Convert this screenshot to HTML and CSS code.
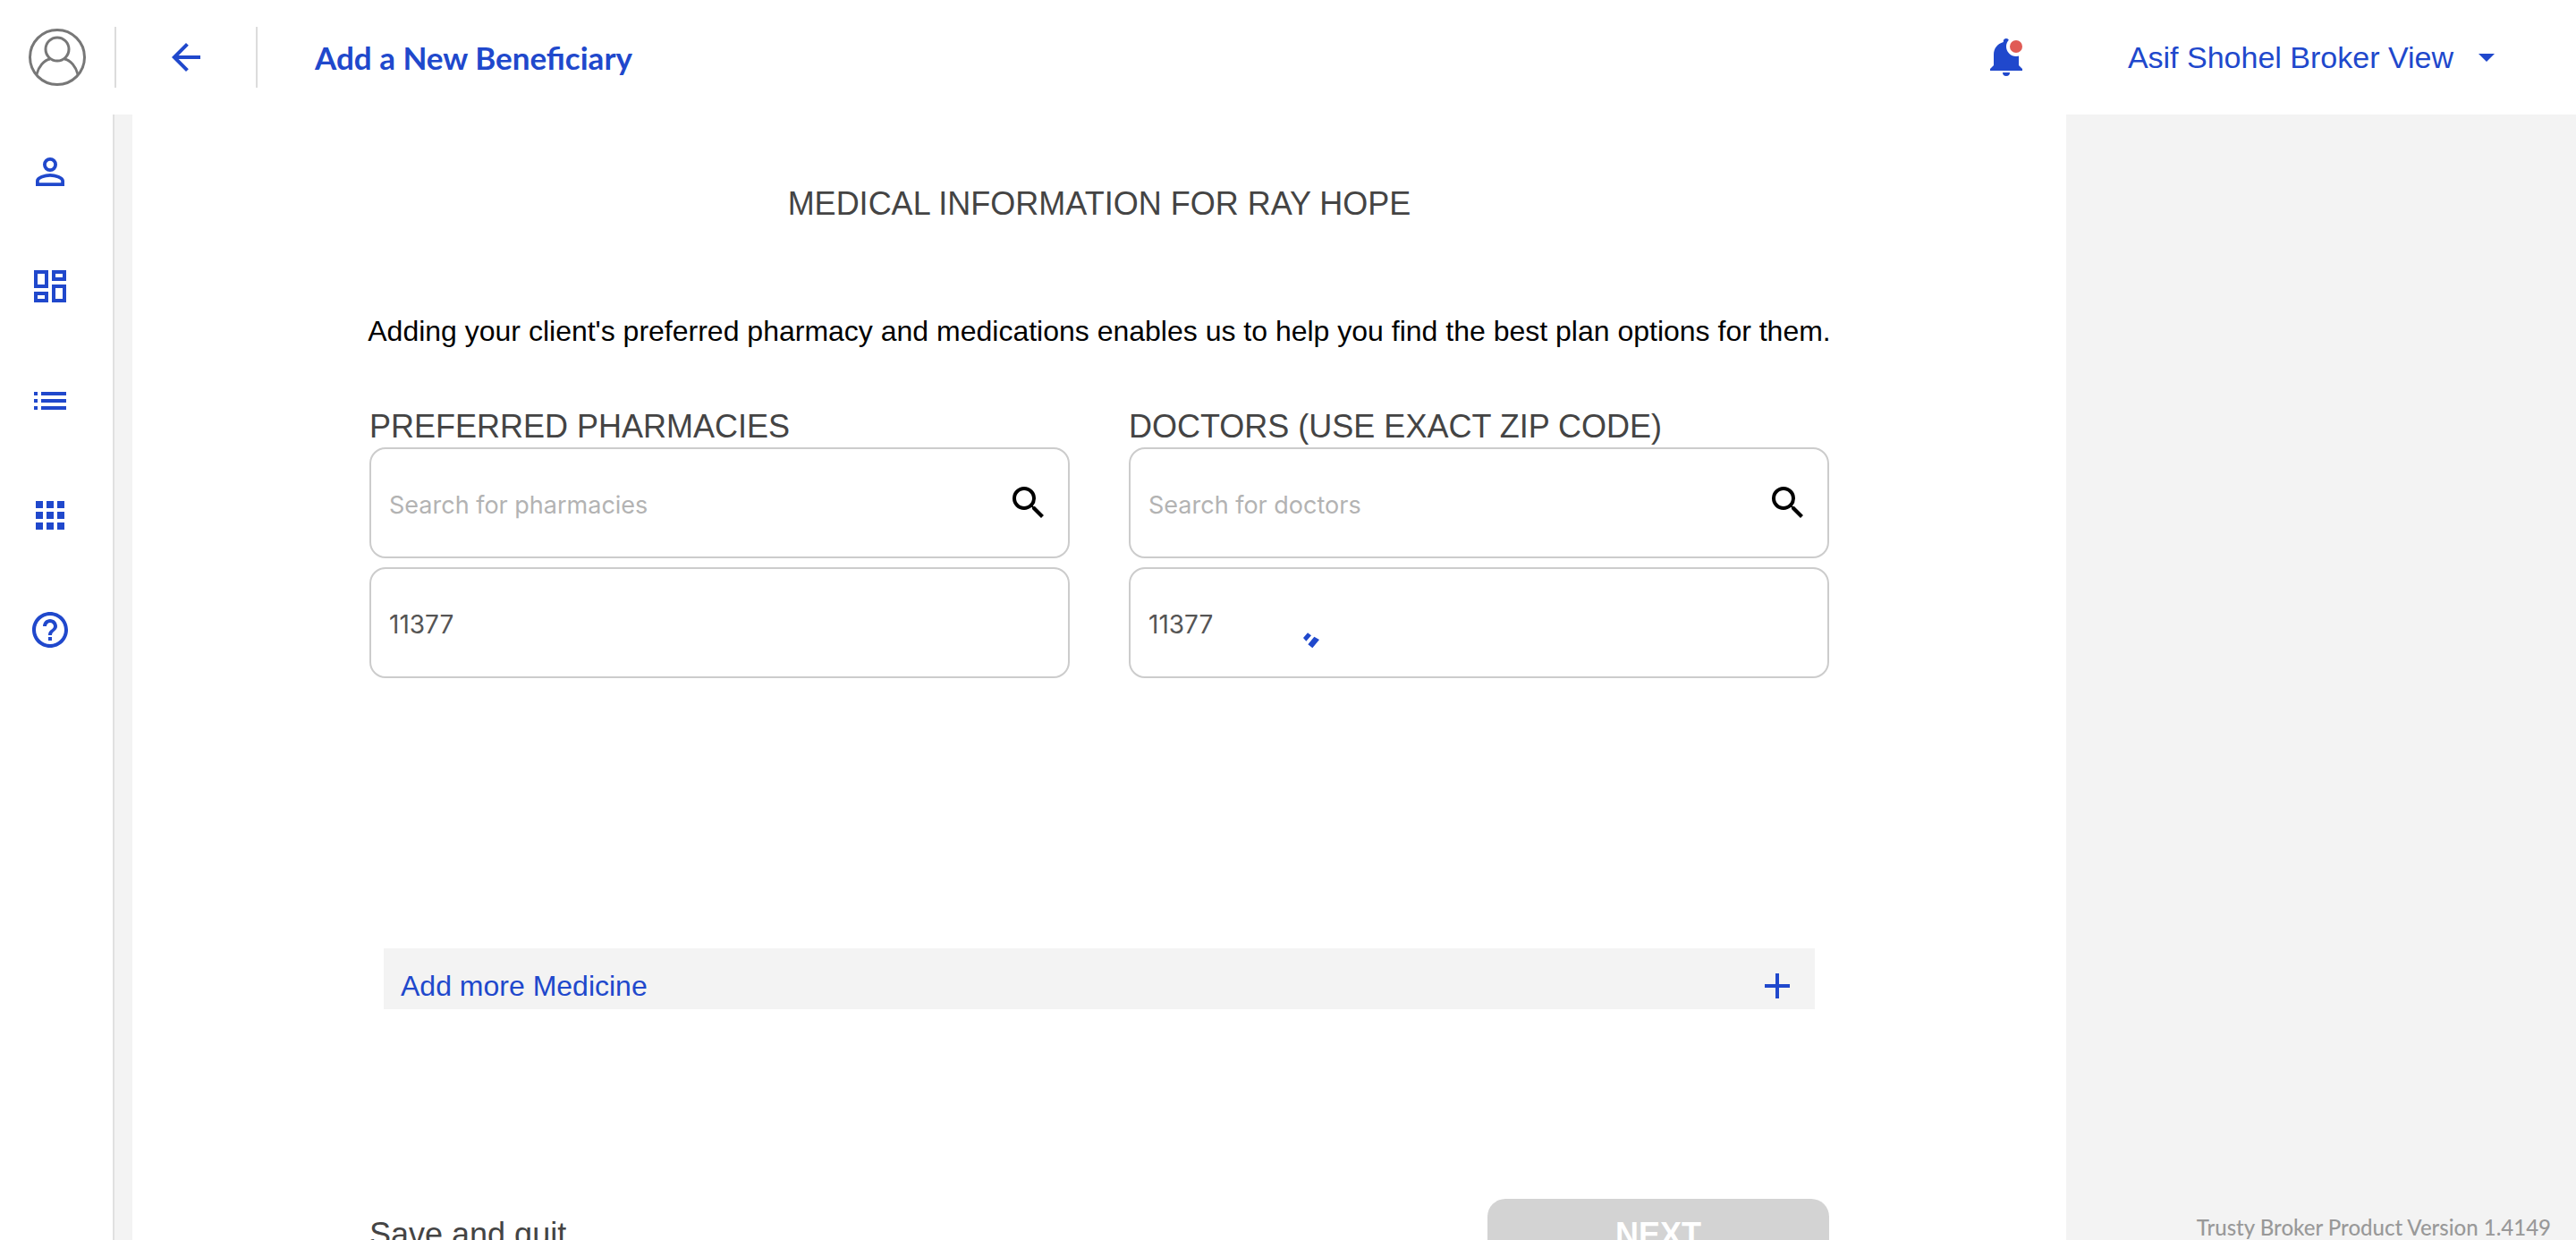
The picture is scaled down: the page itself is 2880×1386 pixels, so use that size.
FILE: index.html
```html
<!DOCTYPE html>
<html lang="en">
<head>
<meta charset="utf-8">
<meta name="viewport" content="width=device-width, initial-scale=1">
<title>Add a New Beneficiary</title>
<link rel="stylesheet" href="styles.css">
</head>
<body>
<div class="app">
  <header class="topbar">
    <a class="avatar" href="#profile" aria-label="Profile">
      <svg viewBox="0 0 64 64" width="64" height="64" fill="none" stroke="#777" stroke-width="3"><circle cx="32" cy="32" r="30.5"/><circle cx="32" cy="23" r="13"/><path d="M9 51C11 43 17 35 24 34M40 34C47 35 53 43 55 51"/></svg>
    </a>
    <button class="back" type="button" aria-label="Back">
      <svg class="icon" viewBox="0 0 24 24"><path d="M20 11H7.830l5.590-5.590L12 4l-8 8 8 8 1.410-1.410L7.830 13H20v-2z"/></svg>
    </button>
    <h1 class="page-title">Add a New Beneficiary</h1>
    <button class="bell" type="button" aria-label="Notifications">
      <svg viewBox="0 0 40 44" width="40" height="44"><path fill="#2048cc" d="M18 1c2 0 3.200 1.400 3.200 3v1C28 7 32 13 32 20v11l4 4v2H0v-2l4-4V19C4 12 8 7 14.800 5V4C14.800 2.400 16 1 18 1zM14 39h8a4 4 0 0 1-8 0z"/><circle cx="29" cy="10" r="11" fill="#fff"/><circle cx="29" cy="10" r="7" fill="#e05b55"/></svg>
    </button>
    <button class="account" type="button">Asif Shohel Broker View
      <svg viewBox="0 0 18 9" width="18" height="9"><path d="M0 0h18l-9 9z"/></svg>
    </button>
  </header>
  <div class="body">
    <nav class="sidebar" aria-label="Main">
      <a href="#clients" aria-label="Clients"><svg class="icon" viewBox="0 0 24 24"><path d="M12 5.900a2.100 2.100 0 1 1 0 4.200 2.100 2.100 0 0 1 0-4.200m0 9c2.970 0 6.100 1.460 6.100 2.100v1.100H5.900V17c0-.640 3.130-2.100 6.100-2.100M12 4a4 4 0 1 0 0 8 4 4 0 0 0 0-8zm0 9c-2.670 0-8 1.340-8 4v3h16v-3c0-2.660-5.330-4-8-4z"/></svg></a>
      <a href="#dashboard" aria-label="Dashboard"><svg class="icon" viewBox="0 0 24 24"><path d="M19 5v2h-4V5h4M9 5v6H5V5h4m10 8v6h-4v-6h4M9 17v2H5v-2h4M21 3h-8v6h8V3zM11 3H3v10h8V3zm10 8h-8v10h8V11zm-10 4H3v6h8v-6z"/></svg></a>
      <a href="#list" aria-label="List"><svg class="icon" viewBox="0 0 24 24"><path d="M3 13h2v-2H3v2zm0 4h2v-2H3v2zm0-8h2V7H3v2zm4 4h14v-2H7v2zm0 4h14v-2H7v2zM7 7v2h14V7H7z"/></svg></a>
      <a href="#apps" aria-label="Apps"><svg class="icon" viewBox="0 0 24 24"><path d="M4 8h4V4H4v4zm6 12h4v-4h-4v4zm-6 0h4v-4H4v4zm0-6h4v-4H4v4zm6 0h4v-4h-4v4zm6-10v4h4V4h-4zm-6 4h4V4h-4v4zm6 6h4v-4h-4v4zm0 6h4v-4h-4v4z"/></svg></a>
      <a href="#help" aria-label="Help"><svg class="icon" viewBox="0 0 24 24"><path d="M11 18h2v-2h-2v2zm1-16C6.480 2 2 6.480 2 12s4.480 10 10 10 10-4.480 10-10S17.520 2 12 2zm0 18c-4.410 0-8-3.590-8-8s3.590-8 8-8 8 3.590 8 8-3.590 8-8 8zm0-14c-2.210 0-4 1.790-4 4h2c0-1.100.9-2 2-2s2 .9 2 2c0 2-3 1.750-3 5h2c0-2.250 3-2.500 3-5 0-2.210-1.790-4-4-4z"/></svg></a>
    </nav>
    <main class="panel">
      <form class="form">
        <h2 class="heading form-title">MEDICAL INFORMATION FOR RAY HOPE</h2>
        <p class="intro">Adding your client's preferred pharmacy and medications enables us to help you find the best plan options for them.</p>
        <div class="columns">
          <section class="column">
            <h3 class="heading">PREFERRED PHARMACIES</h3>
            <div class="field">
              <input class="query" type="text" aria-label="Search for pharmacies" placeholder="Search for pharmacies">
              <button type="button" class="search" aria-label="Search"><svg class="icon" viewBox="0 0 24 24"><path d="M15.500 14h-.790l-.280-.270A6.471 6.471 0 0 0 16 9.500 6.500 6.500 0 1 0 9.500 16c1.610 0 3.090-.590 4.230-1.570l.270.280v.790l5 4.990L20.490 19l-4.990-5zm-6 0C7.010 14 5 11.990 5 9.500S7.010 5 9.500 5 14 7.010 14 9.500 11.990 14 9.500 14z"/></svg></button>
            </div>
            <div class="field"><input type="text" aria-label="Pharmacy zip code" value="11377"></div>
          </section>
          <section class="column">
            <h3 class="heading">DOCTORS (USE EXACT ZIP CODE)</h3>
            <div class="field">
              <input class="query" type="text" aria-label="Search for doctors" placeholder="Search for doctors">
              <button type="button" class="search" aria-label="Search"><svg class="icon" viewBox="0 0 24 24"><path d="M15.500 14h-.790l-.280-.270A6.471 6.471 0 0 0 16 9.500 6.500 6.500 0 1 0 9.500 16c1.610 0 3.090-.590 4.230-1.570l.270.280v.790l5 4.990L20.490 19l-4.990-5zm-6 0C7.010 14 5 11.990 5 9.500S7.010 5 9.500 5 14 7.010 14 9.500 11.990 14 9.500 14z"/></svg></button>
            </div>
            <div class="field">
              <input type="text" aria-label="Doctor zip code" value="11377">
              <svg class="loader" viewBox="0 0 54 54" width="18" height="18"><path d="M15 1l12 9-17 19L0 18zM37 14l17 10-23 28-15-12z"/></svg>
            </div>
          </section>
        </div>
        <button class="add" type="button">Add more Medicine
          <svg class="icon" viewBox="0 0 24 24"><path d="M19 13h-6v6h-2v-6H5v-2h6V5h2v6h6v2z"/></svg>
        </button>
        <div class="actions">
          <button class="quit" type="button">Save and quit</button>
          <button class="next" type="submit" disabled>NEXT</button>
        </div>
      </form>
    </main>
    <footer class="version">Trusty Broker Product Version 1.4149</footer>
  </div>
</div>
</body>
</html>
```
FILE: styles.css
```css
* { box-sizing: border-box; }

body {
  margin: 0;
  background: #f3f3f3;
  color: #444;
  font-family: "Liberation Sans", Arial, sans-serif;
}

h1, h2, h3, p { margin: 0; font-weight: 400; }

button {
  border: 0;
  padding: 0;
  background: none;
  color: inherit;
  font: inherit;
}

svg { display: block; flex: none; }

.icon { width: 48px; height: 48px; fill: currentColor; }

.app {
  display: flex;
  flex-direction: column;
  height: 100vh;
}

.topbar {
  display: flex;
  align-items: center;
  flex: none;
  height: 128px;
  padding: 0 91px 0 32px;
  background: #fff;
  color: #2048cc;
}

.back {
  display: flex;
  justify-content: center;
  align-items: center;
  width: 160px;
  height: 68px;
  margin: 0 64px 0 32px;
  border: solid #dcdcdc;
  border-width: 0 2px;
}

.page-title {
  flex: 1;
  font: 700 35px/48px Lato, sans-serif;
}

.bell { margin-right: 114px; }

.account {
  display: flex;
  align-items: center;
  gap: 28px;
  font-size: 34px;
  line-height: 48px;
}

.account svg { fill: currentColor; }

.body {
  display: flex;
  flex: 1;
  min-height: 0;
}

.sidebar {
  display: flex;
  flex-direction: column;
  gap: 80px;
  flex: none;
  width: 128px;
  padding: 40px 0 0 32px;
  border-right: 2px solid #e0e0e0;
  background: #fff;
}

.sidebar a { width: 48px; color: #2048cc; }

.panel {
  flex: 1;
  margin-left: 20px;
  padding: 76px 265px 48px;
  overflow: auto;
  scrollbar-width: none;
  background: #fff;
}

.form { display: flex; flex-direction: column; }

.heading { font-size: 36px; line-height: 48px; }

.form-title { text-align: center; }

.intro {
  margin: 94px -2px 0;
  color: #000;
  font-size: 32px;
  line-height: 48px;
  text-align: center;
  white-space: nowrap;
}

.columns {
  display: grid;
  grid-template-columns: 1fr 1fr;
  gap: 66px;
  margin-top: 60px;
}

.columns .heading { line-height: 46px; }

.field {
  display: flex;
  align-items: center;
  position: relative;
  height: 124px;
  padding: 0 20px;
  border: 2px solid #ccc;
  border-radius: 18px;
}

.field + .field { margin-top: 10px; }

.field input {
  flex: 1;
  min-width: 0;
  height: 100%;
  border: 0;
  padding: 4px 0 0;
  outline: 0;
  background: none;
  color: #555;
  font: 28px Inter, sans-serif;
}

.field .query { font-size: 27px; }

.field input::placeholder { color: #b3b3b3; opacity: 1; }

.search { color: #000; }

.loader {
  position: absolute;
  top: 71px;
  left: 193px;
  fill: #2048cc;
}

.add {
  display: flex;
  justify-content: space-between;
  align-items: center;
  height: 68px;
  margin: 302px 16px 0;
  padding: 16px 18px 0 19px;
  background: #f3f3f3;
  color: #2048cc;
  font-size: 32px;
}

.actions {
  display: flex;
  justify-content: space-between;
  align-items: center;
  margin-top: 212px;
}

.quit { font-size: 36px; }

.next {
  width: 382px;
  height: 80px;
  border-radius: 20px;
  background: #d3d3d3;
  color: #fff;
  font-size: 36px;
  font-weight: 700;
}

.version {
  align-self: flex-end;
  flex: none;
  width: 570px;
  padding-right: 28px;
  color: #999;
  font: 500 24px/28px Lato, sans-serif;
  text-align: right;
}
```
